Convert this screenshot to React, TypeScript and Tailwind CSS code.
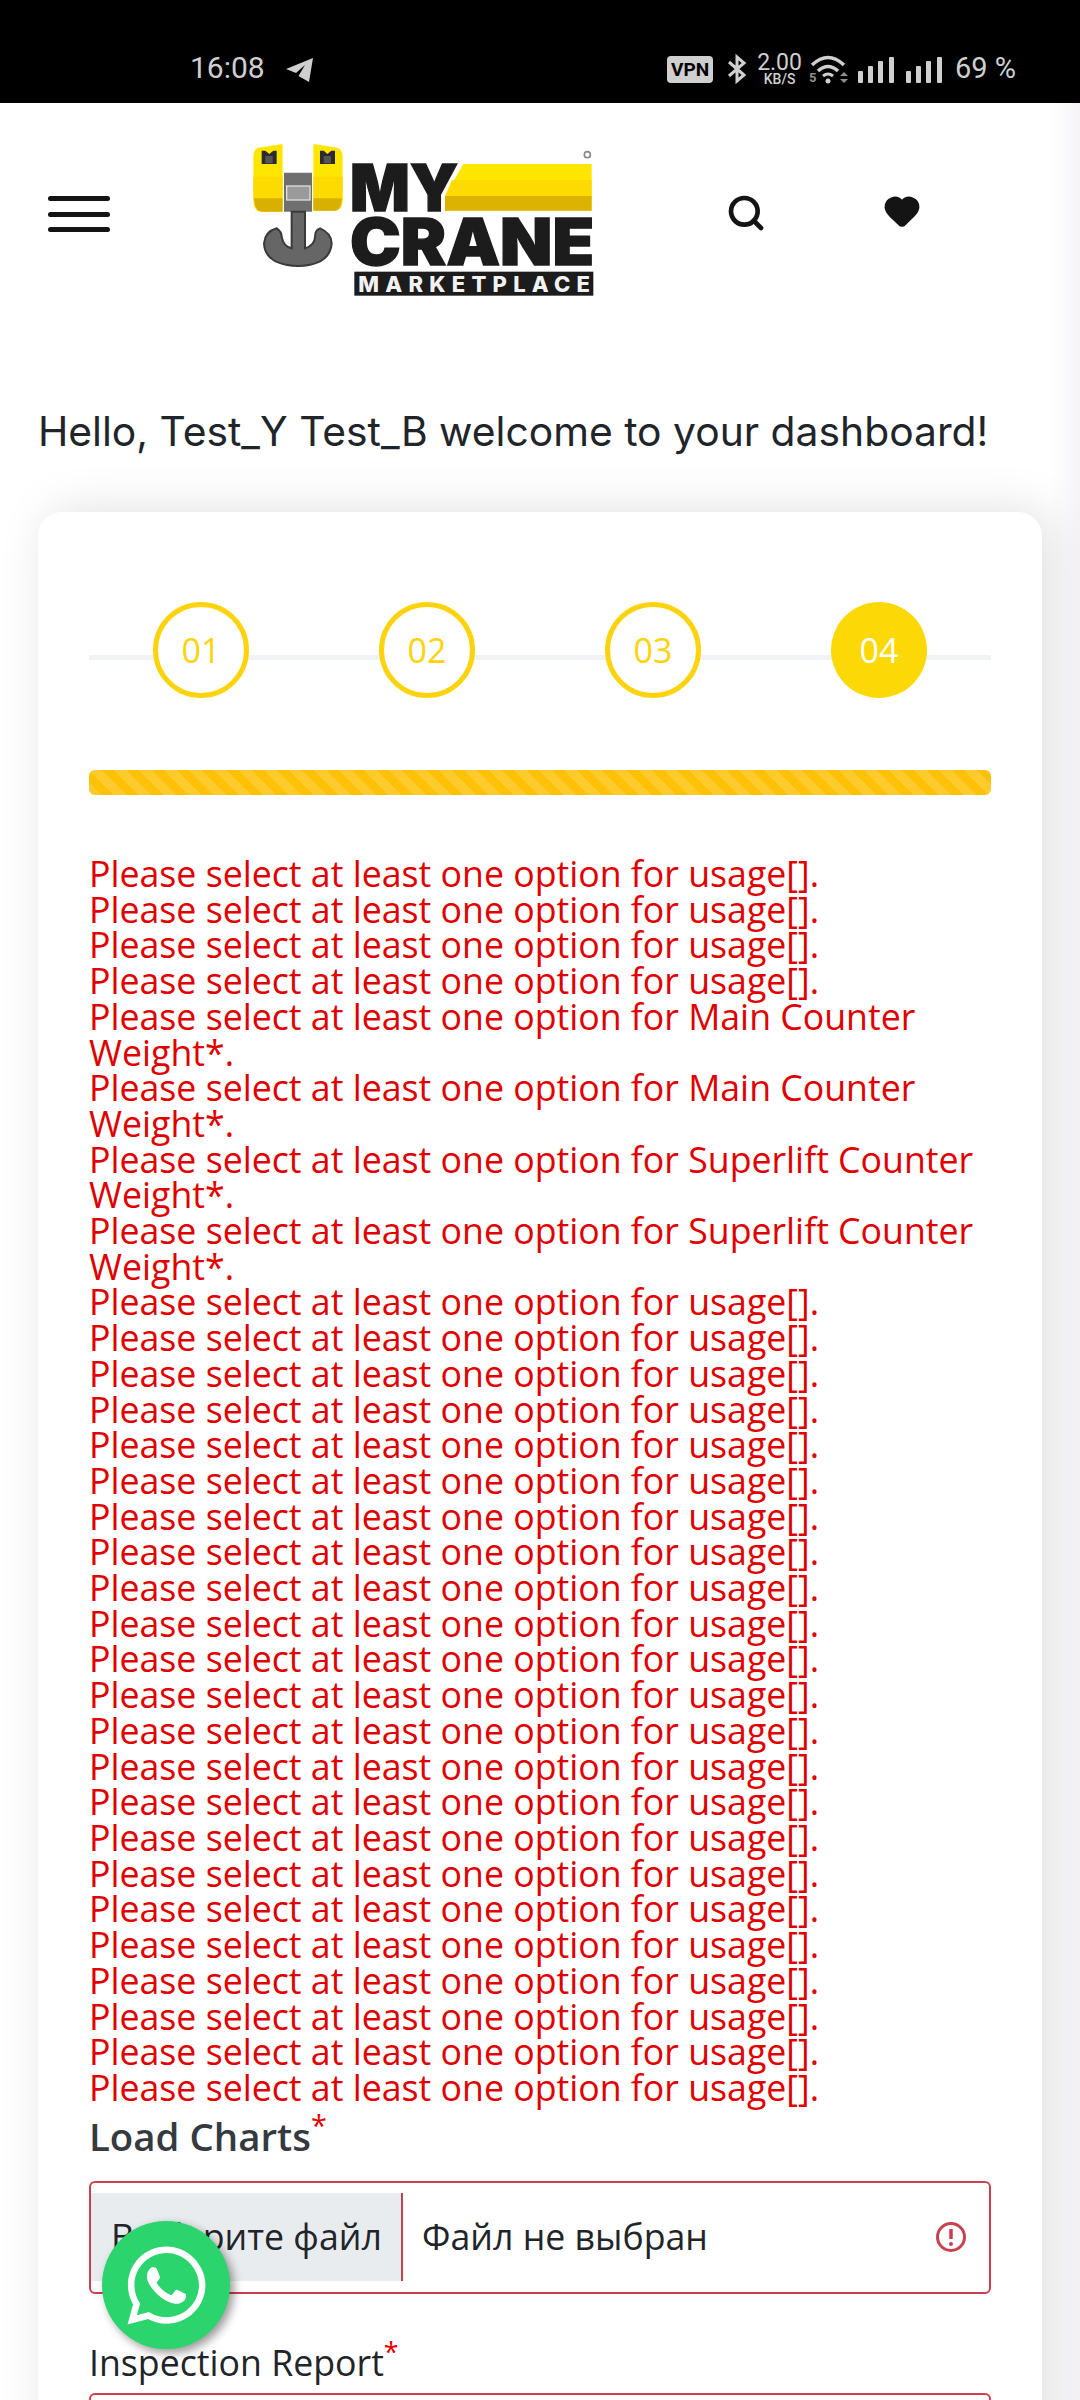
import { Heart, Search } from "lucide-react";
import { FaWhatsapp } from "react-icons/fa";

const USAGE = "Please select at least one option for usage[].";
const MAIN = "Please select at least one option for Main Counter Weight*.";
const SUPER = "Please select at least one option for Superlift Counter Weight*.";

const errors = [
  USAGE,
  USAGE,
  USAGE,
  USAGE,
  MAIN,
  MAIN,
  SUPER,
  SUPER,
  ...Array.from({ length: 23 }, () => USAGE),
];

function StatusBar() {
  return (
    <div className="h-[103px] bg-black flex items-end pb-[17px] pl-[190px] pr-[64px] text-[#cfcfcf] font-['Roboto',sans-serif]">
      <span className="text-[30px] leading-[36px]">16:08</span>
      <svg width="30" height="28" viewBox="0 0 30 28" className="ml-[20px] mb-[1px]">
        <path d="M28 1 L1 12 L11 16 L20 8 L13.5 19 L24 25 Z" fill="#cfcfcf" />
      </svg>
      <div className="ml-auto flex items-end">
        <span className="h-[27px] w-[46px] rounded-[4px] bg-[#cfcfcf] text-black text-[19px] leading-[27px] font-bold text-center mb-[3px]">
          VPN
        </span>
        <svg width="20" height="30" viewBox="0 0 20 30" fill="none" stroke="#cfcfcf" strokeWidth="3" className="ml-[14px] mb-[2px]">
          <path d="M2 8 L17 21 L10 27 V3 L17 9 L2 22" />
        </svg>
        <div className="ml-[10px] flex flex-col items-center">
          <span className="text-[23px] leading-[20px]">2.00</span>
          <span className="text-[14px] leading-[13px] font-medium">KB/S</span>
        </div>
        <svg width="40" height="30" viewBox="0 0 40 30" fill="none" stroke="#cfcfcf" className="ml-[7px] mb-[2px]">
          <text x="0" y="28" fontSize="13" fontWeight="700" fill="#8f8f8f" stroke="none" fontFamily="Roboto, sans-serif">5</text>
          <path d="M3 11 Q19 -4 35 11" strokeWidth="3.5" />
          <path d="M9 17 Q19 8 29 17" strokeWidth="3.5" />
          <path d="M14 22 Q19 18 24 22" strokeWidth="3" />
          <circle cx="19" cy="27" r="2.5" fill="#cfcfcf" stroke="none" />
          <path d="M31 22 L35 18 L39 22 Z M31 25 L35 29 L39 25 Z" fill="#8f8f8f" stroke="none" />
        </svg>
        <SignalBars className="ml-[9px]" />
        <SignalBars className="ml-[12px]" />
        <span className="ml-[13px] text-[29px] leading-[36px]">69 %</span>
      </div>
    </div>
  );
}

function SignalBars({ className }: { className: string }) {
  return (
    <svg width="36" height="26" viewBox="0 0 36 26" fill="#cfcfcf" className={`${className} mb-[3px]`}>
      <rect x="0" y="14" width="5" height="12" rx="1" />
      <rect x="10" y="9" width="5" height="17" rx="1" />
      <rect x="20" y="4" width="5" height="22" rx="1" />
      <rect x="31" y="0" width="5" height="26" rx="1" />
    </svg>
  );
}

function Logo() {
  return (
    <svg width="400" height="190" viewBox="0 0 1200 570">
      {/* hook block */}
      <path d="M100 110 Q100 82 125 82 L188 72 V275 H125 Q100 275 100 240 Z" fill="#ffe600" />
      <path d="M280 72 L345 82 Q368 85 368 110 V240 Q368 270 345 272 H280 Z" fill="#ffe600" />
      <path d="M100 170 H188 V235 H100 Z M280 170 H368 V235 H280 Z" fill="#fedb00" />
      <path d="M102 235 H188 V275 H125 Q104 275 102 235 Z M280 235 H366 Q364 272 345 272 H280 Z" fill="#d8b000" />
      <path d="M125 92 L136 92 L148 102 L160 92 H170 V132 H125 Z M300 92 L311 92 L322 102 L334 92 H345 V132 H300 Z" fill="#2b2b2b" />
      <rect x="136" y="108" width="22" height="22" fill="#555" />
      <rect x="311" y="108" width="22" height="22" fill="#555" />
      <path d="M192 158 H276 V275 H192 Z" fill="#6f6f6f" />
      <rect x="200" y="198" width="70" height="42" fill="#9a9a9a" stroke="#ddd" strokeWidth="4" />
      <path d="M215 275 H255 V385 Q285 375 285 350 Q285 330 300 325 Q335 340 335 370 Q330 435 235 438 Q135 435 132 370 Q135 335 170 325 Q185 335 185 350 Q190 380 215 385 Z" fill="#666" stroke="#3a3a3a" strokeWidth="6" />
      {/* yellow bar */}
      <path d="M730 132 H1115 V272 H675 V228 Z" fill="#ffe600" />
      <path d="M696 180 H1115 V228 H675 Z" fill="#fedb00" />
      <path d="M675 228 H1115 V272 H675 Z" fill="#dcb400" />
      <circle cx="1102" cy="104" r="9" fill="none" stroke="#888" strokeWidth="5" />
      <text x="390" y="272" textLength="325" lengthAdjust="spacingAndGlyphs" fontFamily="Inter, sans-serif" fontWeight="900" fontSize="192" fill="#1c1c1c" stroke="#1c1c1c" strokeWidth="4">MY</text>
      <text x="390" y="436" textLength="732" lengthAdjust="spacingAndGlyphs" fontFamily="Inter, sans-serif" fontWeight="900" fontSize="192" fill="#1c1c1c" stroke="#1c1c1c" strokeWidth="4">CRANE</text>
      <rect x="403" y="455" width="717" height="72" fill="#1c1c1c" />
      <text x="415" y="515" textLength="695" lengthAdjust="spacing" fontFamily="Inter, sans-serif" fontWeight="800" fontSize="66" fill="#f2f2f2">MARKETPLACE</text>
    </svg>
  );
}

function Header() {
  return (
    <div className="h-[230px] flex items-start relative">
      <div className="ml-[48px] mt-[93px] w-[62px] flex flex-col gap-[10.5px]">
        <span className="h-[5px] bg-[#141414] rounded-full" />
        <span className="h-[5px] bg-[#141414] rounded-full" />
        <span className="h-[5px] bg-[#141414] rounded-full" />
      </div>
      <div className="ml-[110px] mt-[17px]">
        <Logo />
      </div>
      <Search size={40} strokeWidth={2.8} className="ml-[106px] mt-[90px] text-[#141414]" />
      <Heart size={38} fill="#141414" className="ml-[117px] mt-[89px] text-[#141414]" />
    </div>
  );
}

function Step({ label, active }: { label: string; active?: boolean }) {
  return (
    <div
      className={
        active
          ? "relative w-[96px] h-[96px] rounded-full bg-[#fdd807] text-white text-[34px] flex items-center justify-center"
          : "relative w-[96px] h-[96px] rounded-full bg-white border-[5px] border-[#fdd30d] text-[#fdd30d] text-[34px] flex items-center justify-center"
      }
    >
      {label}
    </div>
  );
}

function FileInput() {
  return (
    <div className="relative h-[113px] border-2 border-[#c9404f] rounded-[6px] flex items-center">
      <div className="h-[88px] w-[312px] bg-[#e9ecef] border-r-2 border-[#c9404f] text-[35.7px] text-[#212529] flex items-center pl-[20px] whitespace-nowrap">
        Выберите файл
      </div>
      <span className="ml-[19px] text-[35.7px] text-[#212529]">Файл не выбран</span>
      <svg width="30" height="30" viewBox="0 0 30 30" fill="none" className="ml-auto mr-[23px]">
        <circle cx="15" cy="15" r="13.5" stroke="#c9404f" strokeWidth="3" />
        <path d="M15 7 V17" stroke="#c9404f" strokeWidth="3.5" />
        <circle cx="15" cy="22" r="2" fill="#c9404f" />
      </svg>
    </div>
  );
}

export default function App() {
  return (
    <div className="relative h-[2400px] w-[1080px] overflow-hidden bg-white font-['Open_Sans',sans-serif]">
      {/* page shadow on the right edge */}
      <div className="absolute right-0 top-[103px] bottom-0 w-[30px] bg-linear-to-r from-transparent to-[#f6f4f8]" />

      <StatusBar />
      <Header />

      <p className="ml-[38px] mt-[73px] h-[50px] text-[40.8px] leading-[50px] text-[#212529] font-['Inter',sans-serif] whitespace-nowrap">
        Hello, Test_Y Test_B welcome to your dashboard!
      </p>

      {/* Form card */}
      <div className="relative mx-[38px] mt-[56px] w-[1004px] h-[2000px] rounded-t-[24px] bg-white px-[51px] pt-[90px] shadow-[10px_0_50px_rgba(0,0,0,0.13)]">
        <div className="relative flex justify-between px-[64px]">
          <div className="absolute left-0 right-0 top-[53px] h-[5px] bg-[#f0f2f5]" />
          <Step label="01" />
          <Step label="02" />
          <Step label="03" />
          <Step label="04" active />
        </div>

        <div className="mt-[72px] h-[25px] rounded-[6px] bg-[#ffc107] bg-[linear-gradient(45deg,rgba(255,255,255,0.15)_25%,transparent_25%,transparent_50%,rgba(255,255,255,0.15)_50%,rgba(255,255,255,0.15)_75%,transparent_75%,transparent)] bg-size-[25px_25px]" />

        <div className="mt-[61px] text-[35.7px] leading-[35.7px] text-[#e00000]">
          {errors.map((text, i) => (
            <div key={i}>{text}</div>
          ))}
        </div>

        <label className="block mt-[3px] text-[38.4px] leading-[54px] font-semibold text-[#343a40]">
          Load Charts<sup className="text-[#e00000] font-normal">*</sup>
        </label>
        <div className="mt-[18px]">
          <FileInput />
        </div>

        <label className="block mt-[41px] text-[35.7px] leading-[54px] text-[#212529]">
          Inspection Report<sup className="text-[#e00000]">*</sup>
        </label>
        <div className="mt-[4px] h-[113px] border-2 border-[#c9404f] rounded-[6px]" />
      </div>

      {/* WhatsApp button */}
      <div className="absolute left-[102px] top-[2221px] w-[128px] h-[128px] rounded-full bg-[#2bd46c] text-white flex items-center justify-center shadow-[4px_4px_10px_rgba(0,0,0,0.4)]">
        <FaWhatsapp size={89} />
      </div>
    </div>
  );
}
